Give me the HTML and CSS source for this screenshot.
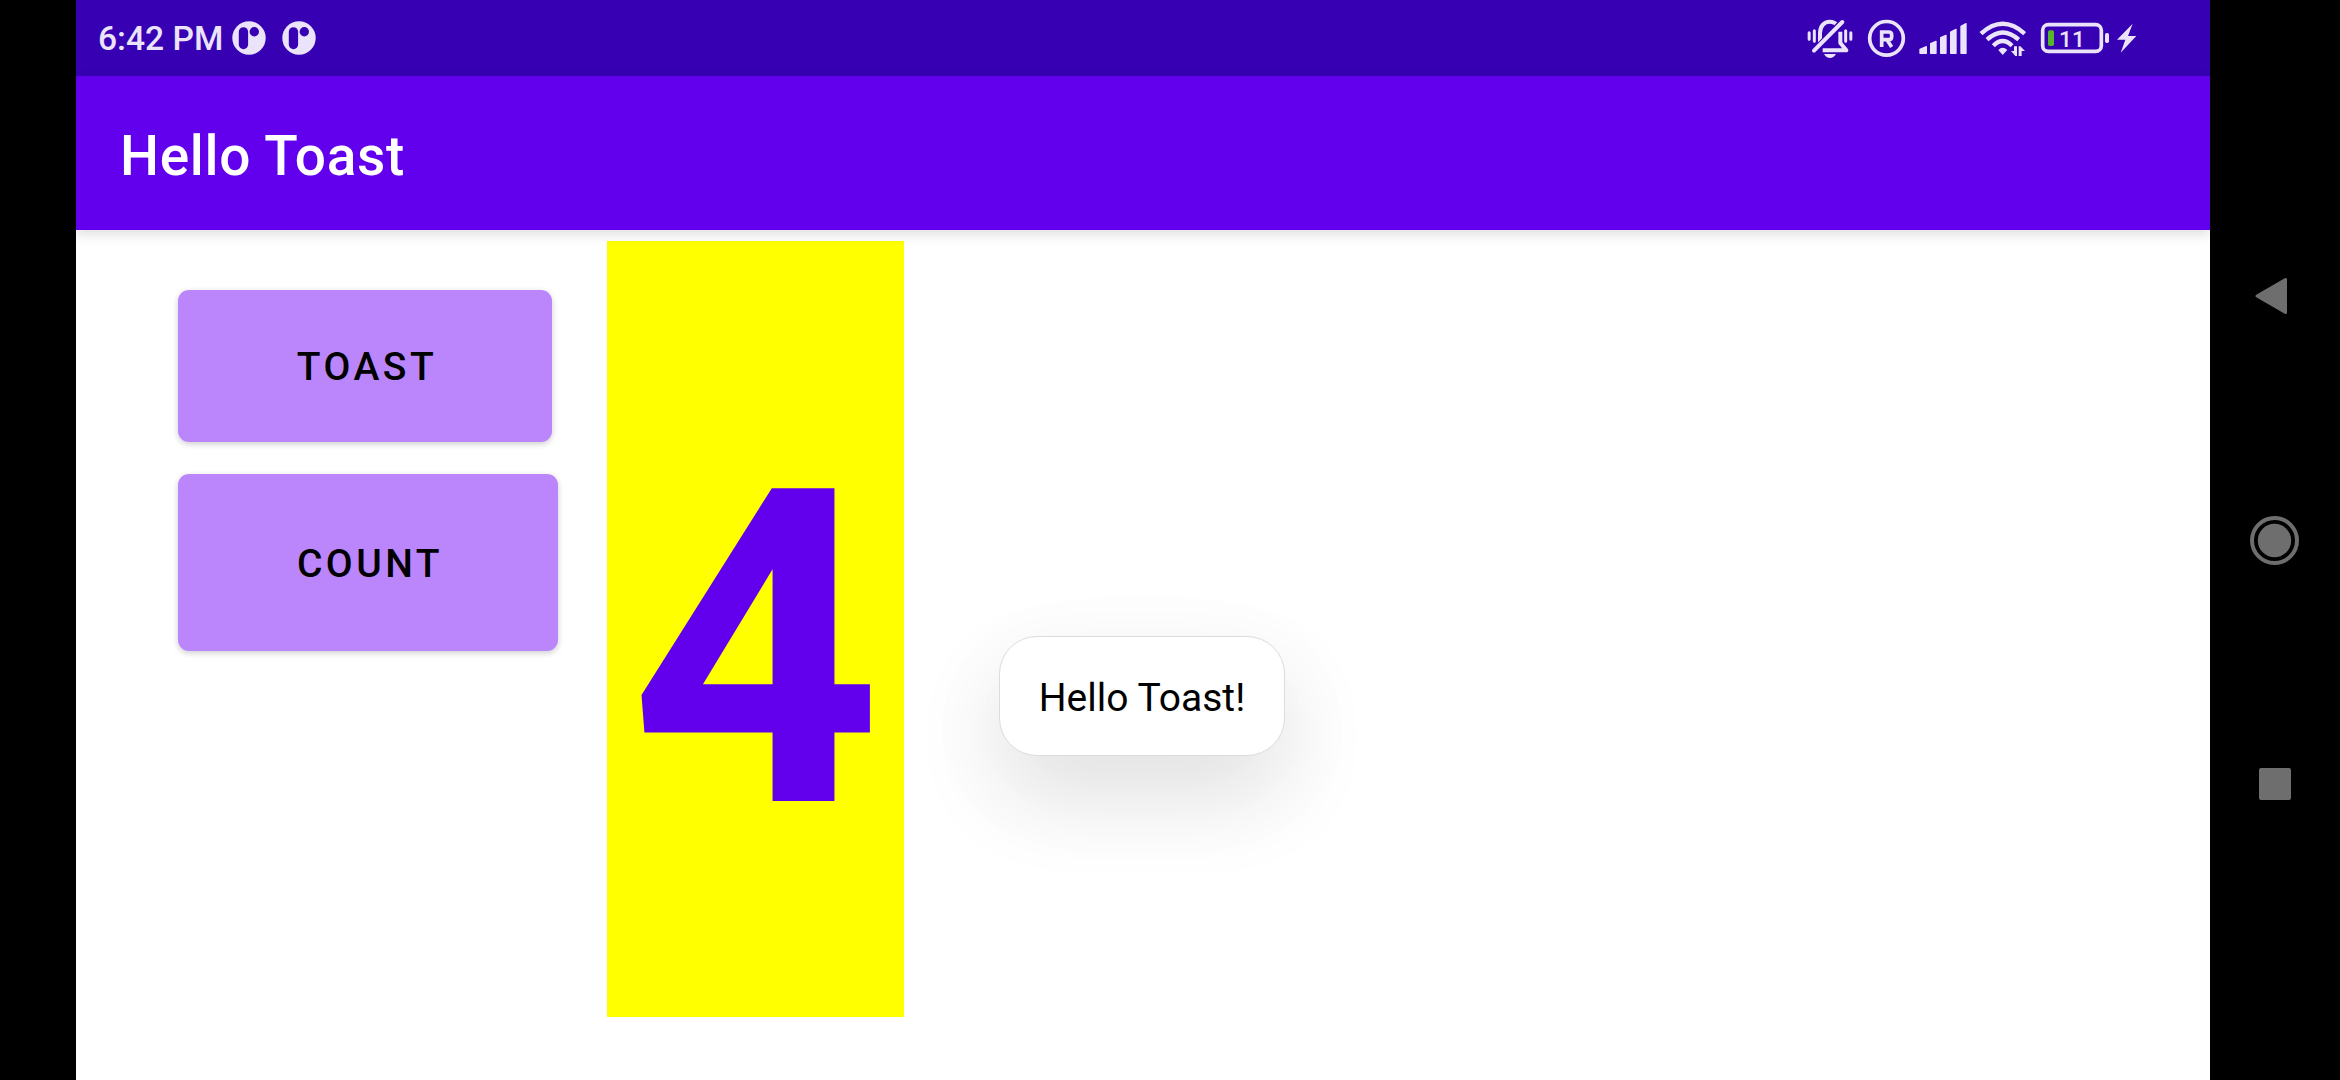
FILE: index.html
```html
<!DOCTYPE html>
<html lang="en">
<head>
<meta charset="utf-8">
<title>Hello Toast</title>
<link rel="stylesheet" href="styles.css">
</head>
<body>
<div class="screen">
  <header class="status-bar">
    <span class="clock">6:42 PM</span>
    <svg class="notice" width="34" height="34" viewBox="0 0 34 34"><circle cx="17" cy="17" r="16.7" fill="#ebe3fa"/><rect x="6.8" y="6.2" width="9.3" height="22" rx="4.65" fill="#3700b3"/><circle cx="22.3" cy="10.7" r="4.7" fill="#3700b3"/></svg>
    <svg class="notice" width="34" height="34" viewBox="0 0 34 34"><circle cx="17" cy="17" r="16.7" fill="#ebe3fa"/><rect x="6.8" y="6.2" width="9.3" height="22" rx="4.65" fill="#3700b3"/><circle cx="22.3" cy="10.7" r="4.7" fill="#3700b3"/></svg>
    <div class="system-icons">
      <svg class="bell" width="46" height="76" viewBox="51 0 138 228">
        <path d="M90 130V100C90 79 102 65 119 65C129 65 137 69 142 76M151 95V129L169 151H98" fill="none" stroke="#ebe3fa" stroke-width="12" stroke-linejoin="round"/>
        <path d="M155 68L80 147" stroke="#3700b3" stroke-width="21"/>
        <path d="M157 66L72 152" stroke="#ebe3fa" stroke-width="12" stroke-linecap="round"/>
        <path d="M102 162H138Q131 174 120 174Q109 174 102 162Z" fill="#ebe3fa"/>
        <path d="M57.500 98V118M73 92V124M167 92V124M182.500 98V118" stroke="#ebe3fa" stroke-width="9" stroke-linecap="round"/>
      </svg>
      <svg class="registered" width="39" height="76" viewBox="231 0 117 228" fill="none" stroke="#ebe3fa">
        <circle cx="289.500" cy="115" r="50.500" stroke-width="11"/>
        <path d="M275 141V96H296Q305 96 305 104V110Q305 119 296 119H275M291 119L305 141" stroke-width="11"/>
      </svg>
      <svg class="signal" width="50" height="76" viewBox="384 0 150 228" fill="#ebe3fa" stroke="#ebe3fa" stroke-width="4" stroke-linejoin="round">
        <path d="M390 148L409 140V160H390ZM422 131L438 124V160H422ZM452 113L468 106V160H452ZM482 96L498 88V160H482ZM513 79L528 71V160H513Z"/>
      </svg>
      <svg class="wifi" width="47" height="76" viewBox="27 0 141 228">
        <path d="M33 101Q98 42 164 101M51 119Q98 76 146 119M70 137Q98 109 126 137" fill="none" stroke="#ebe3fa" stroke-width="13"/>
        <path d="M85 150Q98 137 112 150L98 165Z" fill="#ebe3fa"/>
        <path d="M132 139H141V168H136L123 153H132ZM146 139H151L165 153H155V168H146Z" fill="#ebe3fa"/>
      </svg>
      <svg class="battery" width="70" height="76" viewBox="210 0 210 228">
        <rect x="218" y="74" width="176" height="80" rx="17" fill="none" stroke="#ebe3fa" stroke-width="11"/>
        <rect x="234" y="91" width="18" height="47" rx="5" fill="#55b52b"/>
        <rect x="405" y="99" width="12" height="30" rx="5" fill="#ebe3fa"/>
        <text class="battery-level" x="267" y="141">11</text>
      </svg>
      <svg class="bolt" width="21" height="76" viewBox="438 0 63 228"><path d="M488 71L441 119H466L452 158L499 108H474Z" fill="#ebe3fa"/></svg>
    </div>
  </header>
  <div class="app-bar"><h1 class="title">Hello Toast</h1></div>
  <main class="content">
    <div class="actions">
      <button class="button toast-button">TOAST</button>
      <button class="button count-button">COUNT</button>
    </div>
    <div class="counter">4</div>
    <div class="toast">Hello Toast!</div>
  </main>
</div>
<nav class="nav-bar">
  <svg width="50" height="50" viewBox="0 0 50 50"><path d="M7 18.500L35.500 2V35Z" transform="translate(0 6.500)" fill="#6e6e6e" stroke="#6e6e6e" stroke-width="3" stroke-linejoin="round"/></svg>
  <svg width="50" height="50" viewBox="0 0 50 50"><circle cx="24.500" cy="25.500" r="22.500" fill="none" stroke="#6e6e6e" stroke-width="4"/><circle cx="24.500" cy="25.500" r="16.700" fill="#6e6e6e"/></svg>
  <svg width="50" height="50" viewBox="0 0 50 50"><rect x="9" y="9" width="32" height="32" rx="2" fill="#6e6e6e"/></svg>
</nav>
</body>
</html>
```
FILE: styles.css
```css
* { box-sizing: border-box; }
body {
  margin: 0;
  width: 2340px;
  height: 1080px;
  padding-left: 76px;
  display: flex;
  overflow: hidden;
  background: #000;
  font-family: Roboto, sans-serif;
}
.screen {
  width: 2134px;
  height: 1080px;
  display: flex;
  flex-direction: column;
  background: #fff;
  overflow: hidden;
}
.status-bar {
  height: 76px;
  flex: none;
  display: flex;
  align-items: center;
  padding: 0 73px 0 22px;
  background: #3700b3;
  color: #ebe3fa;
}
.clock {
  width: 134px;
  font-size: 33.6px;
  font-weight: 500;
  line-height: 76px;
  white-space: nowrap;
  padding-top: 2px;
}
.notice { margin-right: 16px; }
.system-icons { display: flex; margin-left: auto; }
.registered { margin-left: 14px; }
.signal { margin-left: 12px; }
.wifi { margin-left: 11px; }
.battery { margin-left: 14px; }
.bolt { margin-left: 6px; }
.battery-level {
  font-size: 68px;
  font-weight: 500;
  fill: #ebe3fa;
}
.app-bar {
  height: 154px;
  flex: none;
  display: flex;
  align-items: center;
  padding: 5px 44px 0;
  background: #6200ee;
  box-shadow: 0 4px 12px rgba(0, 0, 0, .14);
  z-index: 1;
}
.title {
  margin: 0;
  color: #fff;
  font-size: 55px;
  font-weight: 500;
  line-height: 64px;
  letter-spacing: .69px;
}
.content {
  flex: 1;
  display: flex;
  align-items: flex-start;
  padding: 11px 0 0 102px;
}
.actions {
  width: 429px;
  display: flex;
  flex-direction: column;
  align-items: flex-start;
  gap: 32px;
  padding-top: 49px;
}
.button {
  border: 0;
  border-radius: 11px;
  padding: 2px 0 0 4px;
  background: #bb86fc;
  color: #000;
  font: 500 39px Roboto, sans-serif;
  letter-spacing: 3.48px;
  box-shadow: 0 2px 6px rgba(0, 0, 0, .2);
}
.toast-button { width: 374px; height: 152px; }
.count-button { width: 380px; height: 177px; }
.counter {
  width: 297px;
  height: 776px;
  padding-top: 22px;
  background: #ff0;
  color: #6200ee;
  font-size: 440px;
  font-weight: 700;
  line-height: 776px;
  text-align: center;
}
.toast {
  width: 286px;
  height: 120px;
  margin: 395px 0 0 95px;
  padding-top: 2px;
  border: 1px solid #dcdcdc;
  border-radius: 38px;
  background: #fff;
  color: #000;
  font-size: 39px;
  line-height: 118px;
  text-align: center;
  white-space: nowrap;
  box-shadow: 0 40px 90px rgba(0, 0, 0, .11), 0 30px 120px 20px rgba(0, 0, 0, .02);
}
.nav-bar {
  width: 130px;
  height: 1080px;
  display: flex;
  flex-direction: column;
  align-items: center;
  justify-content: center;
  gap: 194px;
}
```
